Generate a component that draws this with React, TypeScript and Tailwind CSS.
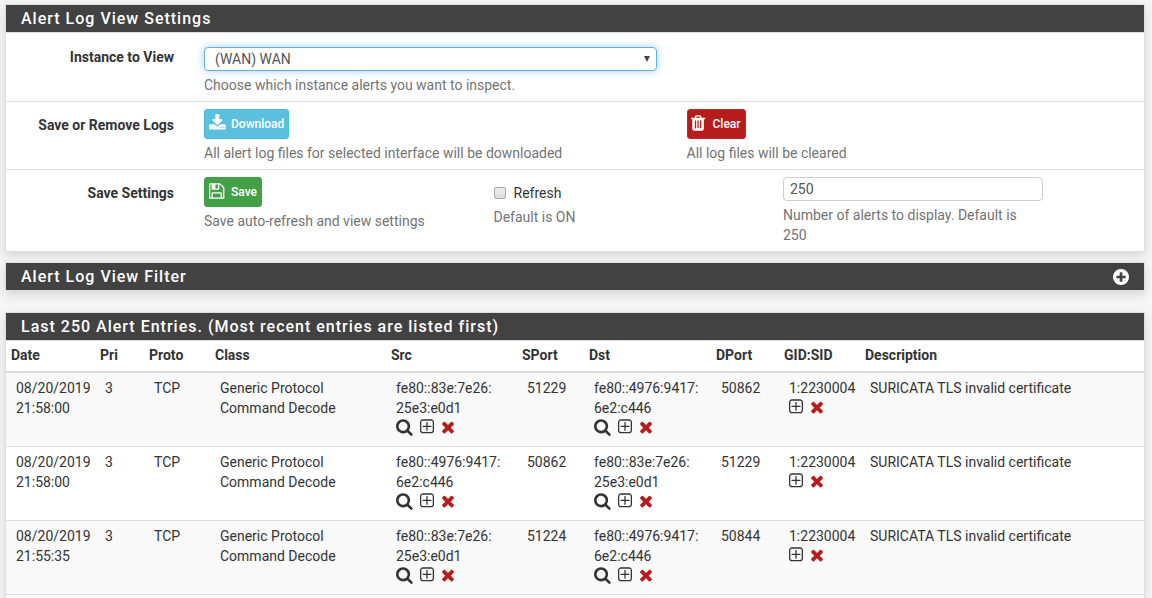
import { useState } from "react";
import type { ReactNode } from "react";

const icons = {
  search: {
    box: "64 0 1664 1792",
    d: "M1216 832q0-185-131.5-316.5t-316.5-131.5-316.5 131.5-131.5 316.5 131.5 316.5 316.5 131.5 316.5-131.5 131.5-316.5zm512 832q0 52-38 90t-90 38q-54 0-90-38l-343-342q-179 124-399 124-143 0-273.5-55.5t-225-150-150-225-55.5-273.5 55.5-273.5 150-225 225-150 273.5-55.5 273.5 55.5 225 150 150 225 55.5 273.5q0 220-124 399l343 343q37 37 37 90z",
  },
  times: {
    box: "192 0 1408 1792",
    d: "M1490 1322q0 40-28 68l-136 136q-28 28-68 28t-68-28l-294-294-294 294q-28 28-68 28t-68-28l-136-136q-28-28-28-68t28-68l294-294-294-294q-28-28-28-68t28-68l136-136q28-28 68-28t68 28l294 294 294-294q28-28 68-28t68 28l136 136q28 28 28 68t-28 68l-294 294 294 294q28 28 28 68z",
  },
  plusSquare: {
    box: "192 0 1408 1792",
    d: "M1344 800v64q0 14-9 23t-23 9h-352v352q0 14-9 23t-23 9h-64q-14 0-23-9t-9-23v-352h-352q-14 0-23-9t-9-23v-64q0-14 9-23t23-9h352v-352q0-14 9-23t23-9h64q14 0 23 9t9 23v352h352q14 0 23 9t9 23zm128 448v-832q0-66-47-113t-113-47h-832q-66 0-113 47t-47 113v832q0 66 47 113t113 47h832q66 0 113-47t47-113zm128-832v832q0 119-84.5 203.5t-203.5 84.5h-832q-119 0-203.5-84.5t-84.5-203.5v-832q0-119 84.5-203.5t203.5-84.5h832q119 0 203.5 84.5t84.5 203.5z",
  },
  plusCircle: {
    box: "128 128 1536 1536",
    d: "M1344 960v-128q0-26-19-45t-45-19h-256v-256q0-26-19-45t-45-19h-128q-26 0-45 19t-19 45v256h-256q-26 0-45 19t-19 45v128q0 26 19 45t45 19h256v256q0 26 19 45t45 19h128q26 0 45-19t19-45v-256h256q26 0 45-19t19-45zm320-64q0 209-103 385.5t-279.5 279.5-385.5 103-385.5-103-279.5-279.5-103-385.5 103-385.5 279.5-279.5 385.5-103 385.5 103 279.5 279.5 103 385.5z",
  },
  download: {
    box: "64 0 1664 1792",
    d: "M1344 1344q0-26-19-45t-45-19-45 19-19 45 19 45 45 19 45-19 19-45zm256 0q0-26-19-45t-45-19-45 19-19 45 19 45 45 19 45-19 19-45zm128-224v320q0 40-28 68t-68 28h-1472q-40 0-68-28t-28-68v-320q0-40 28-68t68-28h465l135 136q58 56 136 56t136-56l136-136h464q40 0 68 28t28 68zm-325-569q17 41-14 70l-448 448q-18 19-45 19t-45-19l-448-448q-31-29-14-70 17-39 59-39h256v-448q0-26 19-45t45-19h256q26 0 45 19t19 45v448h256q42 0 59 39z",
  },
  floppy: {
    box: "128 0 1536 1792",
    d: "M512 1536h768v-384h-768v384zm896 0h128v-896q0-14-10-38.5t-20-34.5l-281-281q-10-10-34-20t-39-10v416q0 40-28 68t-68 28h-576q-40 0-68-28t-28-68v-416h-128v1280h128v-416q0-40 28-68t68-28h832q40 0 68 28t28 68v416zm-384-928v-320q0-13-9.5-22.5t-22.5-9.5h-192q-13 0-22.5 9.5t-9.5 22.5v320q0 13 9.5 22.5t22.5 9.5h192q13 0 22.5-9.5t9.5-22.5zm640 32v928q0 40-28 68t-68 28h-1344q-40 0-68-28t-28-68v-1344q0-40 28-68t68-28h928q40 0 88 20t76 48l280 280q28 28 48 76t20 88z",
  },
  trash: {
    box: "192 0 1408 1792",
    d: "M704 1376v-704q0-14-9-23t-23-9h-64q-14 0-23 9t-9 23v704q0 14 9 23t23 9h64q14 0 23-9t9-23zm256 0v-704q0-14-9-23t-23-9h-64q-14 0-23 9t-9 23v704q0 14 9 23t23 9h64q14 0 23-9t9-23zm256 0v-704q0-14-9-23t-23-9h-64q-14 0-23 9t-9 23v704q0 14 9 23t23 9h64q14 0 23-9t9-23zm-544-992h448l-48-117q-7-9-17-11h-317q-10 2-17 11zm928 32v64q0 14-9 23t-23 9h-96v948q0 83-47 143.5t-113 60.5h-832q-66 0-113-58.5t-47-141.5v-952h-96q-14 0-23-9t-9-23v-64q0-14 9-23t23-9h309l70-167q15-37 54-63t79-26h320q40 0 79 26t54 63l70 167h309q14 0 23 9t9 23z",
  },
};

const Icon = ({ name, className }: { name: keyof typeof icons; className: string }) => (
  <svg viewBox={icons[name].box} preserveAspectRatio="xMinYMid" fill="currentColor" className={className} aria-hidden="true">
    <path d={icons[name].d} />
  </svg>
);

const HOST_A = ["fe80::83e:7e26:", "25e3:e0d1"];
const HOST_B = ["fe80::4976:9417:", "6e2:c446"];

const alerts = [
  { date: "08/20/2019", time: "21:58:00", src: HOST_A, sport: 51229, dst: HOST_B, dport: 50862 },
  { date: "08/20/2019", time: "21:58:00", src: HOST_B, sport: 50862, dst: HOST_A, dport: 51229 },
  { date: "08/20/2019", time: "21:55:35", src: HOST_A, sport: 51224, dst: HOST_B, dport: 50844 },
];

const columns = [
  { label: "Date", width: "w-[89px]" },
  { label: "Pri", width: "w-[49px]" },
  { label: "Proto", width: "w-[66px]" },
  { label: "Class", width: "w-[176px]" },
  { label: "Src", width: "w-[131px]" },
  { label: "SPort", width: "w-[67px]" },
  { label: "Dst", width: "w-[127px]" },
  { label: "DPort", width: "w-[68px]" },
  { label: "GID:SID", width: "w-[81px]" },
  { label: "Description", width: "" },
];

const PanelHeading = ({ title, children }: { title: string; children?: ReactNode }) => (
  <div className="flex h-[27px] items-center justify-between bg-[#424242] px-[15px] text-white">
    <h2 className="text-base font-medium tracking-[1px]">{title}</h2>
    {children}
  </div>
);

const Help = ({ children }: { children: ReactNode }) => (
  <p className="mt-1 text-[#737373]">{children}</p>
);

const Actions = ({ search = false }: { search?: boolean }) => (
  <div className="flex h-[23px] items-start gap-[7px]">
    {search && (
      <button type="button" aria-label="Resolve host">
        <Icon name="search" className="h-[18px] w-[17px]" />
      </button>
    )}
    <button type="button" aria-label="Add to suppress list">
      <Icon name="plusSquare" className="h-[18px] w-[14px]" />
    </button>
    <button type="button" aria-label="Remove" className="text-[#b71c1c]">
      <Icon name="times" className="h-[18px] w-[14px]" />
    </button>
  </div>
);

const Host = ({ lines }: { lines: string[] }) => (
  <td className="py-[5px] pl-[10px]">
    {lines[0]}
    <br />
    {lines[1]}
    <Actions search />
  </td>
);

const panel = "border border-[#ddd] bg-white shadow-[0_4px_10px_rgba(0,0,0,0.12)]";
const row = "-mx-[10px] grid grid-cols-12 pb-[6px]";
const rowLabel = "col-span-2 px-[15px] pt-[6px] text-right font-bold";
const btn = "flex h-[30px] items-center gap-1 rounded-[3px] border pr-1 text-xs font-medium text-white";

export default function App() {
  const [refresh, setRefresh] = useState(false);
  const [count, setCount] = useState("250");

  return (
    <main className="flex min-h-screen flex-col bg-[#f5f5f5] pt-1 pr-[7px] pl-[5px] font-[Roboto,sans-serif] text-sm leading-5 text-[#333]">
      <section className={panel}>
        <PanelHeading title="Alert Log View Settings" />
        <div className="divide-y divide-[#ddd] overflow-hidden border-t border-[#ddd]">
          <div className={`${row} pt-[14px]`}>
            <label htmlFor="instance" className="col-span-2 px-[15px] text-right font-bold">
              Instance to View
            </label>
            <div className="col-span-5 px-[15px]">
              <div className="relative">
                <select
                  id="instance"
                  className="block h-6 w-full appearance-none rounded border border-[#66afe9] bg-white px-[10px] text-sm leading-5 text-[#555] shadow-[0_0_8px_rgba(102,175,233,0.6)] outline-none"
                >
                  <option>(WAN) WAN</option>
                </select>
                <svg viewBox="0 0 6 6" className="pointer-events-none absolute top-[9px] right-[7px] h-[6px] w-[6px]" aria-hidden="true">
                  <path d="M0 0h6L3 6z" fill="#444" />
                </svg>
              </div>
              <Help>Choose which instance alerts you want to inspect.</Help>
            </div>
          </div>

          <div className={`${row} pt-[7px]`}>
            <span className={rowLabel}>Save or Remove Logs</span>
            <div className="col-span-5 px-[15px]">
              <button type="button" className={`${btn} border-[#46b8da] bg-[#5bc0de] pl-1`}>
                <Icon name="download" className="mb-[2px] h-[18px] w-[18px]" />
                Download
              </button>
              <Help>All alert log files for selected interface will be downloaded</Help>
            </div>
            <div className="col-span-5 px-[15px]">
              <button type="button" className={`${btn} border-[#c62828] bg-[#b71c1c] pl-[3px]`}>
                <Icon name="trash" className="mb-[2px] h-[18px] w-[18px]" />
                Clear
              </button>
              <Help>All log files will be cleared</Help>
            </div>
          </div>

          <div className={`${row} pt-[7px]`}>
            <span className={rowLabel}>Save Settings</span>
            <div className="col-span-3 px-[15px]">
              <button type="button" className={`${btn} border-[#43a047] bg-[#43a047] pl-1`}>
                <Icon name="floppy" className="mb-[2px] h-[18px] w-[18px]" />
                Save
              </button>
              <Help>Save auto-refresh and view settings</Help>
            </div>
            <div className="col-span-3 px-[15px] pt-[6px]">
              <label className="flex items-center gap-2">
                <input
                  type="checkbox"
                  checked={refresh}
                  onChange={(e) => setRefresh(e.target.checked)}
                  className="h-3 w-3 appearance-none rounded-[2px] border border-[#a9a9a9] bg-gradient-to-b from-[#eee] to-[#ddd] checked:bg-[#555]"
                />
                Refresh
              </label>
              <Help>Default is ON</Help>
            </div>
            <div className="col-span-3 px-[15px]">
              <input
                type="text"
                aria-label="Number of alerts to display"
                value={count}
                onChange={(e) => setCount(e.target.value)}
                className="block h-6 w-full rounded border border-[#ccc] bg-white px-[6px] text-[#555]"
              />
              <Help>Number of alerts to display. Default is 250</Help>
            </div>
          </div>
        </div>
      </section>

      <section className={`${panel} mt-[10px]`}>
        <PanelHeading title="Alert Log View Filter">
          <button type="button" aria-label="Expand filter">
            <Icon name="plusCircle" className="h-4 w-4" />
          </button>
        </PanelHeading>
      </section>

      <section className={`${panel} mt-[21px] flex-1 border-b-0`}>
        <PanelHeading title="Last 250 Alert Entries. (Most recent entries are listed first)" />
        <table className="w-full table-fixed border-separate border-spacing-0 border-t border-[#ddd] text-left">
          <thead>
            <tr>
              {columns.map((col) => (
                <th key={col.label} className={`${col.width} border-b-2 border-[#ddd] px-[5px] pt-1 pb-[6px] font-bold`}>
                  {col.label}
                </th>
              ))}
            </tr>
          </thead>
          <tbody>
            {alerts.map((alert, idx) => (
              <tr key={idx} className="align-top odd:bg-[#f9f9f9] *:border-b *:border-[#ddd]">
                <td className="py-[5px] pl-[10px]">
                  {alert.date}
                  <br />
                  {alert.time}
                </td>
                <td className="py-[5px] pl-[10px]">3</td>
                <td className="py-[5px] pl-[10px]">TCP</td>
                <td className="py-[5px] pl-[10px]">
                  Generic Protocol
                  <br />
                  Command Decode
                </td>
                <Host lines={alert.src} />
                <td className="py-[5px] pl-[10px]">{alert.sport}</td>
                <Host lines={alert.dst} />
                <td className="py-[5px] pl-[10px]">{alert.dport}</td>
                <td className="py-[5px] pl-[10px]">
                  1:2230004
                  <Actions />
                </td>
                <td className="py-[5px] pl-[10px]">SURICATA TLS invalid certificate</td>
              </tr>
            ))}
          </tbody>
        </table>
      </section>
    </main>
  );
}
